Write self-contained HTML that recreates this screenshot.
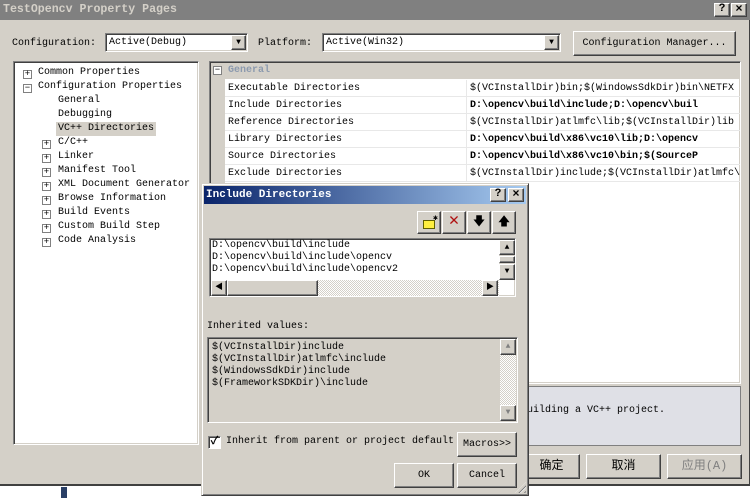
<!DOCTYPE html>
<html><head><meta charset="utf-8"><style>
*{margin:0;padding:0;box-sizing:border-box}
body{width:751px;height:498px;background:#fff;position:relative;overflow:hidden;font-family:"Liberation Mono","Noto Sans CJK SC",monospace;font-size:10px;color:#000}
.a{position:absolute}
.sunk{border:1px solid;border-color:#808080 #fff #fff #808080;box-shadow:inset 1px 1px 0 #404040,inset -1px -1px 0 #d4d0c8}
.btn{background:#d4d0c8;border:1px solid;border-color:#fff #404040 #404040 #fff;box-shadow:inset -1px -1px 0 #808080;text-align:center}
.t{white-space:pre;line-height:14px}
.pm{position:absolute;width:9px;height:9px;border:1px solid #808080;background:#fff;font-size:9px;line-height:7px;text-align:center;color:#000}
.row{position:absolute;left:225px;width:515px;height:17px;border-bottom:1px solid #e8e8e8;line-height:18px}
.row span{position:absolute;white-space:pre}
.sb{background:#d4d0c8;border:1px solid;border-color:#fff #404040 #404040 #fff;box-shadow:inset -1px -1px 0 #808080;font-size:8px;line-height:13px;text-align:center}
.hatch{background:repeating-conic-gradient(#d4d0c8 0 25%,#fff 0 50%) 0 0/2px 2px}
#tree .t{margin-top:3px}
#tree .pm{margin-top:3px}
</style></head><body>
<div class="a" style="left:0;top:0;width:750px;height:486px;background:#d4d0c8;border-right:1px solid #404040;border-bottom:2px solid #404040"></div>
<div class="a" style="left:0;top:0;width:750px;height:20px;background:#808080"></div>
<div class="a t" style="left:3px;top:3px;color:#d4d0c8;font-weight:bold;font-size:11.6px">TestOpencv Property Pages</div>
<div class="a btn" style="left:714px;top:3px;width:16px;height:14px;font-weight:bold;font-size:11px;line-height:11px">?</div>
<div class="a btn" style="left:731px;top:3px;width:16px;height:14px;font-weight:bold;font-size:12px;line-height:11px">×</div>
<div class="a t" style="left:12px;top:37px">Configuration:</div>
<div class="a sunk" style="left:105px;top:33px;width:143px;height:19px;background:#fff"><span class="a t" style="left:3px;top:2px">Active(Debug)</span><div class="a sb" style="right:1px;top:1px;width:15px;height:15px">▼</div></div>
<div class="a t" style="left:258px;top:37px">Platform:</div>
<div class="a sunk" style="left:322px;top:33px;width:239px;height:19px;background:#fff"><span class="a t" style="left:3px;top:2px">Active(Win32)</span><div class="a sb" style="right:1px;top:1px;width:15px;height:15px">▼</div></div>
<div class="a btn" style="left:573px;top:31px;width:163px;height:25px;line-height:23px">Configuration Manager...</div>
<div class="a sunk" style="left:13px;top:61px;width:186px;height:384px;background:#fff"></div>
<div id="tree">
<div class="pm" style="left:23px;top:67px">+</div><div class="a t" style="left:38px;top:63px">Common Properties</div>
<div class="pm" style="left:23px;top:81px">−</div><div class="a t" style="left:38px;top:77px">Configuration Properties</div>
<div class="a t" style="left:58px;top:91px">General</div>
<div class="a t" style="left:58px;top:105px">Debugging</div>
<div class="a" style="left:56px;top:122px;width:100px;height:14px;background:#d4d0c8"></div>
<div class="a t" style="left:58px;top:119px">VC++ Directories</div>
<div class="pm" style="left:42px;top:137px">+</div><div class="a t" style="left:58px;top:133px">C/C++</div>
<div class="pm" style="left:42px;top:151px">+</div><div class="a t" style="left:58px;top:147px">Linker</div>
<div class="pm" style="left:42px;top:165px">+</div><div class="a t" style="left:58px;top:161px">Manifest Tool</div>
<div class="pm" style="left:42px;top:179px">+</div><div class="a t" style="left:58px;top:175px">XML Document Generator</div>
<div class="pm" style="left:42px;top:193px">+</div><div class="a t" style="left:58px;top:189px">Browse Information</div>
<div class="pm" style="left:42px;top:207px">+</div><div class="a t" style="left:58px;top:203px">Build Events</div>
<div class="pm" style="left:42px;top:221px">+</div><div class="a t" style="left:58px;top:217px">Custom Build Step</div>
<div class="pm" style="left:42px;top:235px">+</div><div class="a t" style="left:58px;top:231px">Code Analysis</div>
</div>
<div class="a sunk" style="left:209px;top:61px;width:532px;height:323px;background:#fff"></div>
<div class="a" style="left:211px;top:63px;width:14px;height:319px;background:#d4d0c8"></div>
<div class="a" style="left:211px;top:63px;width:528px;height:16px;background:#d4d0c8"></div>
<div class="pm" style="left:213px;top:66px">−</div>
<div class="a t" style="left:228px;top:64px;color:#8c9aae;font-weight:bold">General</div>
<div class="a" style="left:466px;top:80px;width:1px;height:102px;background:#e8e8e8"></div>
<div class="row" style="top:80px"><span style="left:3px">Executable Directories</span><span style="left:245px">$(VCInstallDir)bin;$(WindowsSdkDir)bin\NETFX</span></div>
<div class="row" style="top:97px"><span style="left:3px">Include Directories</span><span style="left:245px;font-weight:bold">D:\opencv\build\include;D:\opencv\buil</span></div>
<div class="row" style="top:114px"><span style="left:3px">Reference Directories</span><span style="left:245px">$(VCInstallDir)atlmfc\lib;$(VCInstallDir)lib</span></div>
<div class="row" style="top:131px"><span style="left:3px">Library Directories</span><span style="left:245px;font-weight:bold">D:\opencv\build\x86\vc10\lib;D:\opencv</span></div>
<div class="row" style="top:148px"><span style="left:3px">Source Directories</span><span style="left:245px;font-weight:bold">D:\opencv\build\x86\vc10\bin;$(SourceP</span></div>
<div class="row" style="top:165px;overflow:hidden"><span style="left:3px">Exclude Directories</span><span style="left:245px">$(VCInstallDir)include;$(VCInstallDir)atlmfc\</span></div>
<div class="a" style="left:209px;top:386px;width:532px;height:60px;background:#dfe0e6;border:1px solid #808080"></div>
<div class="a t" style="left:527px;top:404px">uilding a VC++ project.</div>
<div class="a btn" style="left:523px;top:454px;width:57px;height:25px;line-height:23px;font-size:12px">确定</div>
<div class="a btn" style="left:586px;top:454px;width:75px;height:25px;line-height:23px;font-size:12px">取消</div>
<div class="a btn" style="left:667px;top:454px;width:75px;height:25px;line-height:23px;font-size:12px;color:#808080">应用(A)</div>
<div class="a" style="left:61px;top:487px;width:6px;height:11px;background:#2a3f66"></div>
<div class="a" style="left:201px;top:183px;width:328px;height:313px;background:#d4d0c8;border:1px solid;border-color:#d4d0c8 #404040 #404040 #d4d0c8;box-shadow:inset 1px 1px 0 #fff,inset -1px -1px 0 #808080"></div>
<div class="a" style="left:204px;top:186px;width:322px;height:18px;background:linear-gradient(90deg,#0a246a,#a6caf0)"></div>
<div class="a t" style="left:206px;top:188px;color:#fff;font-weight:bold;font-size:11px">Include Directories</div>
<div class="a btn" style="left:490px;top:188px;width:16px;height:14px;font-weight:bold;font-size:11px;line-height:11px">?</div>
<div class="a btn" style="left:508px;top:188px;width:16px;height:14px;font-weight:bold;font-size:12px;line-height:11px">×</div>
<div class="a btn" style="left:417px;top:211px;width:24px;height:23px"><div class="a" style="left:5px;top:8px;width:12px;height:9px;background:#ffef40;border:1px solid #606000"></div><div class="a" style="left:15px;top:3px;font-size:8px;line-height:8px">✱</div></div>
<div class="a btn" style="left:442px;top:211px;width:24px;height:23px;color:#b01010;font-size:17px;line-height:20px">✕</div>
<div class="a btn" style="left:467px;top:211px;width:24px;height:23px;font-size:12px;line-height:20px">🡇</div>
<div class="a btn" style="left:492px;top:211px;width:24px;height:23px;font-size:12px;line-height:20px">🡅</div>
<div class="a sunk" style="left:209px;top:238px;width:307px;height:59px;background:#fff"></div>
<div class="a t" style="left:212px;top:240px;line-height:12px">D:\opencv\build\include
D:\opencv\build\include\opencv
D:\opencv\build\include\opencv2</div>
<div class="a" style="left:499px;top:240px;width:16px;height:40px;background:#d4d0c8"></div>
<div class="a sb" style="left:499px;top:240px;width:16px;height:15px">▲</div>
<div class="a sb" style="left:499px;top:256px;width:16px;height:7px"></div>
<div class="a sb" style="left:499px;top:264px;width:16px;height:16px">▼</div>
<div class="a hatch" style="left:211px;top:280px;width:288px;height:16px"></div>
<div class="a sb" style="left:211px;top:280px;width:16px;height:16px">◀</div>
<div class="a sb" style="left:227px;top:280px;width:91px;height:16px"></div>
<div class="a sb" style="left:482px;top:280px;width:16px;height:16px">▶</div>
<div class="a t" style="left:207px;top:320px">Inherited values:</div>
<div class="a sunk" style="left:207px;top:337px;width:311px;height:86px;background:#d4d0c8"></div>
<div class="a t" style="left:212px;top:342px;line-height:12px">$(VCInstallDir)include
$(VCInstallDir)atlmfc\include
$(WindowsSdkDir)include
$(FrameworkSDKDir)\include</div>
<div class="a hatch" style="left:500px;top:339px;width:16px;height:82px"></div>
<div class="a sb" style="left:500px;top:339px;width:16px;height:16px;color:#808080">▲</div>
<div class="a sb" style="left:500px;top:405px;width:16px;height:16px;color:#808080">▼</div>
<div class="a" style="left:208px;top:436px;width:13px;height:13px;background:#fff;border:1px solid;border-color:#808080 #fff #fff #808080;box-shadow:inset 1px 1px 0 #404040;font-size:11px;line-height:10px;text-align:center;font-weight:bold">✓</div>
<div class="a t" style="left:226px;top:435px">Inherit from parent or project default</div>
<div class="a btn" style="left:457px;top:432px;width:60px;height:25px;line-height:23px">Macros&gt;&gt;</div>
<div class="a btn" style="left:394px;top:463px;width:60px;height:25px;line-height:23px">OK</div>
<div class="a btn" style="left:457px;top:463px;width:60px;height:25px;line-height:23px">Cancel</div>
<div class="a" style="left:515px;top:482px;width:11px;height:11px;background:repeating-linear-gradient(135deg,transparent 0 2px,#808080 2px 3px,#fff 3px 4px);clip-path:polygon(100% 0,100% 100%,0 100%)"></div>
</body></html>
